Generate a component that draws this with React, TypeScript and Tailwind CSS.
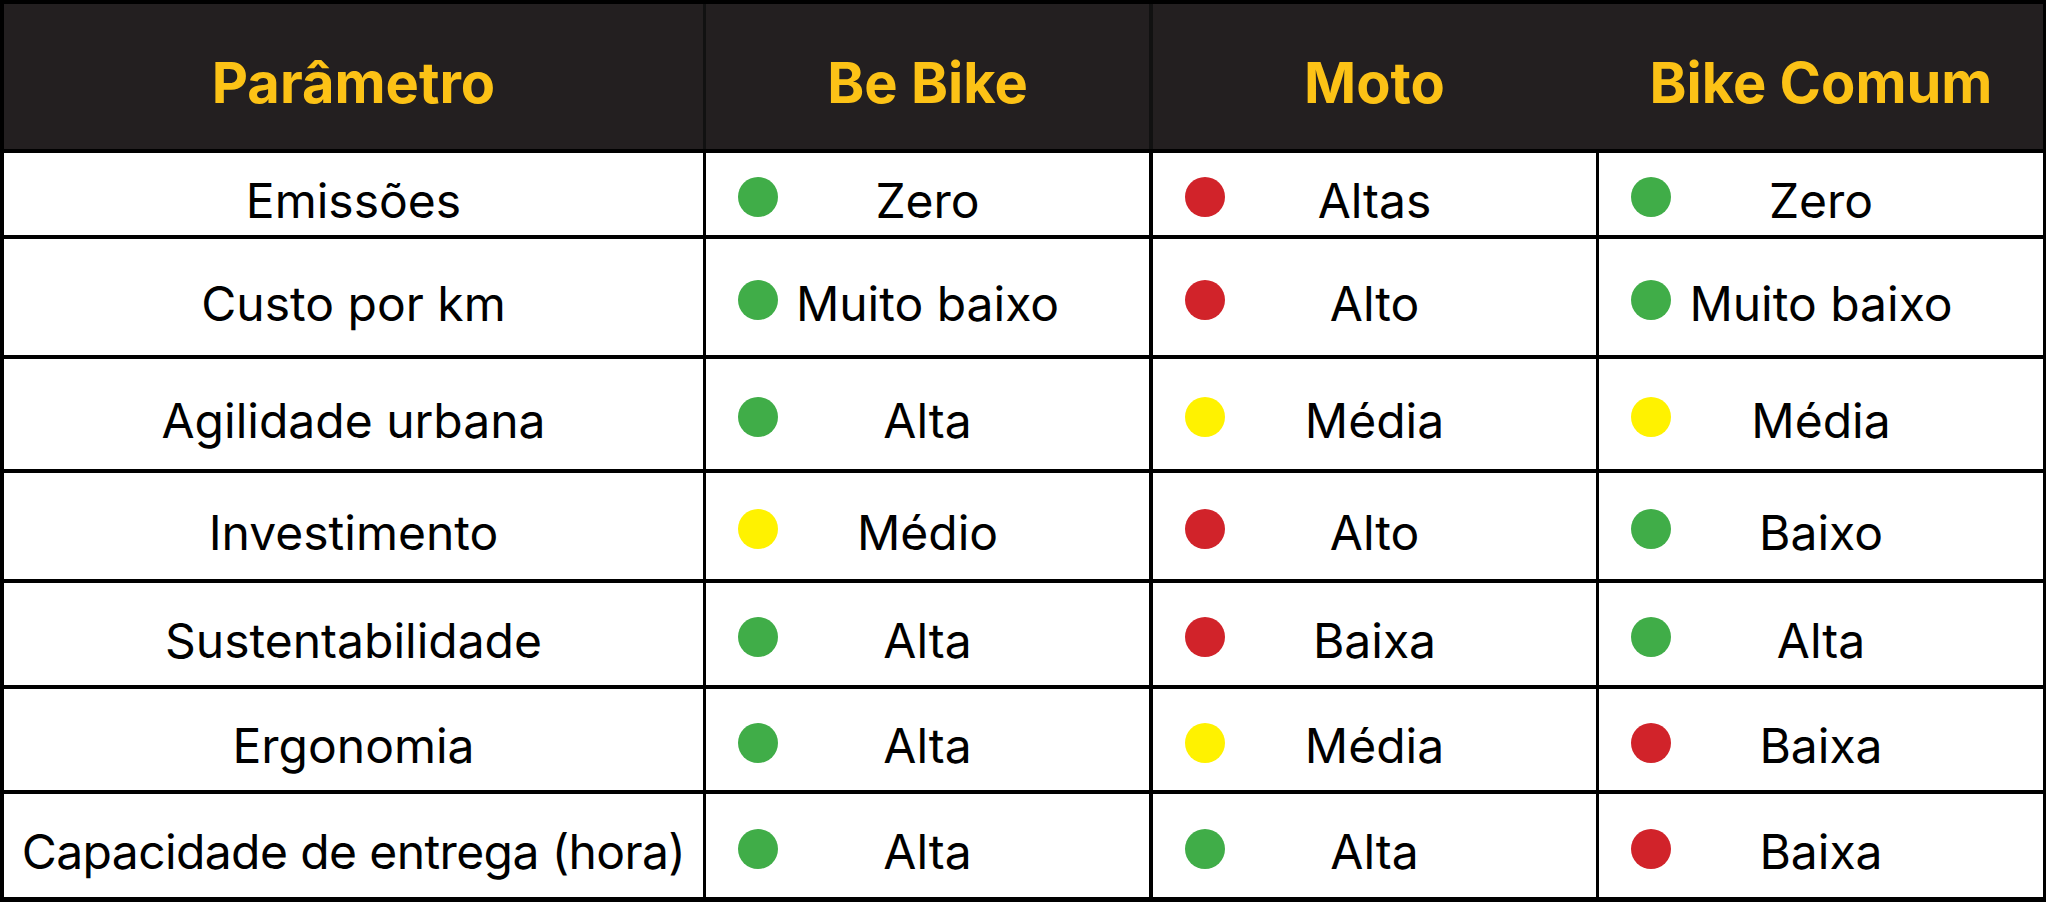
import React from "react";

type Level = "g" | "r" | "y";
const dot: Record<Level, string> = {
  g: "bg-[#40ad48]",
  r: "bg-[#d1232a]",
  y: "bg-[#fff200]",
};

const rows: { p: string; h: string; cells: [Level, string][] }[] = [
  { p: "Emissões", h: "h-[82px]", cells: [["g", "Zero"], ["r", "Altas"], ["g", "Zero"]] },
  { p: "Custo por km", h: "h-[116px]", cells: [["g", "Muito baixo"], ["r", "Alto"], ["g", "Muito baixo"]] },
  { p: "Agilidade urbana", h: "h-[110px]", cells: [["g", "Alta"], ["y", "Média"], ["y", "Média"]] },
  { p: "Investimento", h: "h-[106px]", cells: [["y", "Médio"], ["r", "Alto"], ["g", "Baixo"]] },
  { p: "Sustentabilidade", h: "h-[102px]", cells: [["g", "Alta"], ["r", "Baixa"], ["g", "Alta"]] },
  { p: "Ergonomia", h: "h-[101px]", cells: [["g", "Alta"], ["y", "Média"], ["r", "Baixa"]] },
  { p: "Capacidade de entrega (hora)", h: "h-[103px]", cells: [["g", "Alta"], ["g", "Alta"], ["r", "Baixa"]] },
];

const widths = ["w-[699px]", "w-[446px]", "w-[447px]", "w-[447px]"];
const seps = ["", "border-l-[3px]", "border-l-4", "border-l-[3px]"];

function Cell({ level, text }: { level: Level; text: string }) {
  return (
    <div className="flex h-full items-center px-[32px] pt-[13px]">
      <div className={`-mt-[7px] h-[40px] w-[40px] shrink-0 rounded-full ${dot[level]}`} />
      <div className="flex-1 text-center">{text}</div>
      <div className="w-[40px] shrink-0" />
    </div>
  );
}

const headSep = ["", "border-l-[3px] border-[#111]", "border-l-4 border-[#111]", "border-l-[3px] border-transparent"];

export default function App() {
  return (
    <div
      className="flex h-[902px] w-[2046px] flex-col border-t-4 border-l-4 border-r-[3px] border-b-[5px] border-black bg-white text-[48px] leading-normal text-black"
      style={{ fontFamily: "Inter, 'Noto Sans', sans-serif" }}
    >
      <div className="flex h-[149px] shrink-0 border-b-4 border-black bg-[#231f20] text-[56px] font-bold text-[#fcc216]">
        {["Parâmetro", "Be Bike", "Moto", "Bike Comum"].map((t, i) => (
          <div
            key={t}
            className={`flex shrink-0 items-center justify-center pt-[13px] ${widths[i]} ${headSep[i]}`}
          >
            {t}
          </div>
        ))}
      </div>
      {rows.map((r, ri) => (
        <div
          key={r.p}
          className={`flex shrink-0 ${r.h} ${ri < rows.length - 1 ? "border-b-4 border-black box-content" : ""}`}
        >
          <div
            className={`flex shrink-0 items-center justify-center pt-[13px] ${widths[0]} ${
              ri === rows.length - 1 ? "tracking-[-0.6px]" : ""
            }`}
          >
            {r.p}
          </div>
          {r.cells.map(([l, t], ci) => (
            <div key={ci} className={`shrink-0 border-black ${widths[ci + 1]} ${seps[ci + 1]}`}>
              <Cell level={l} text={t} />
            </div>
          ))}
        </div>
      ))}
    </div>
  );
}
